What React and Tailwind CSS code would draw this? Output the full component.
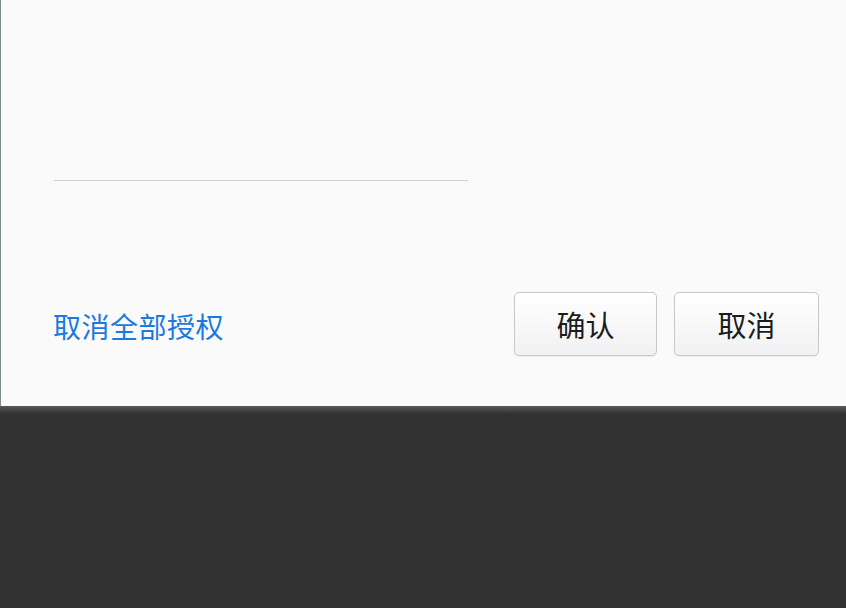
export default function App() {
  return (
    <div className="w-[846px] h-[608px] flex flex-col bg-[#323232] overflow-hidden font-['Liberation_Sans','Noto_Sans_CJK_SC',sans-serif]">
      {/* dialog panel */}
      <div className="h-[406px] flex flex-col bg-[#fafafb] border-l border-[#7d8a8e]">
        <div className="h-[180px] shrink-0" />
        <div className="pl-[53px]">
          <div className="w-[414px] h-px bg-[#cfcfd1]" />
        </div>
        <div className="h-[111px] shrink-0" />
        <div className="flex items-center pl-[52px] pr-[27px]">
          <a className="pt-[10px] text-[28px] leading-none tracking-[0.5px] text-[#1a7ae0] cursor-pointer">取消全部授权</a>
          <div className="ml-auto flex gap-[17px]">
            <button className="w-[143px] h-[64px] pt-[6px] rounded-[5px] border border-[#c8c8ca] bg-gradient-to-b from-white to-[#f1f1f3] text-[29px] leading-none text-[#1c1c1c] shadow-[0_1px_1px_rgba(0,0,0,0.06)]">
              确认
            </button>
            <button className="w-[145px] h-[64px] pt-[6px] rounded-[5px] border border-[#c8c8ca] bg-gradient-to-b from-white to-[#f1f1f3] text-[29px] leading-none text-[#1c1c1c] shadow-[0_1px_1px_rgba(0,0,0,0.06)]">
              取消
            </button>
          </div>
        </div>
      </div>
      {/* dark area below */}
      <div className="flex-1 bg-[#323232]">
        <div className="h-[8px] bg-gradient-to-b from-[#5a5a5a] to-[#323232]" />
      </div>
    </div>
  );
}
